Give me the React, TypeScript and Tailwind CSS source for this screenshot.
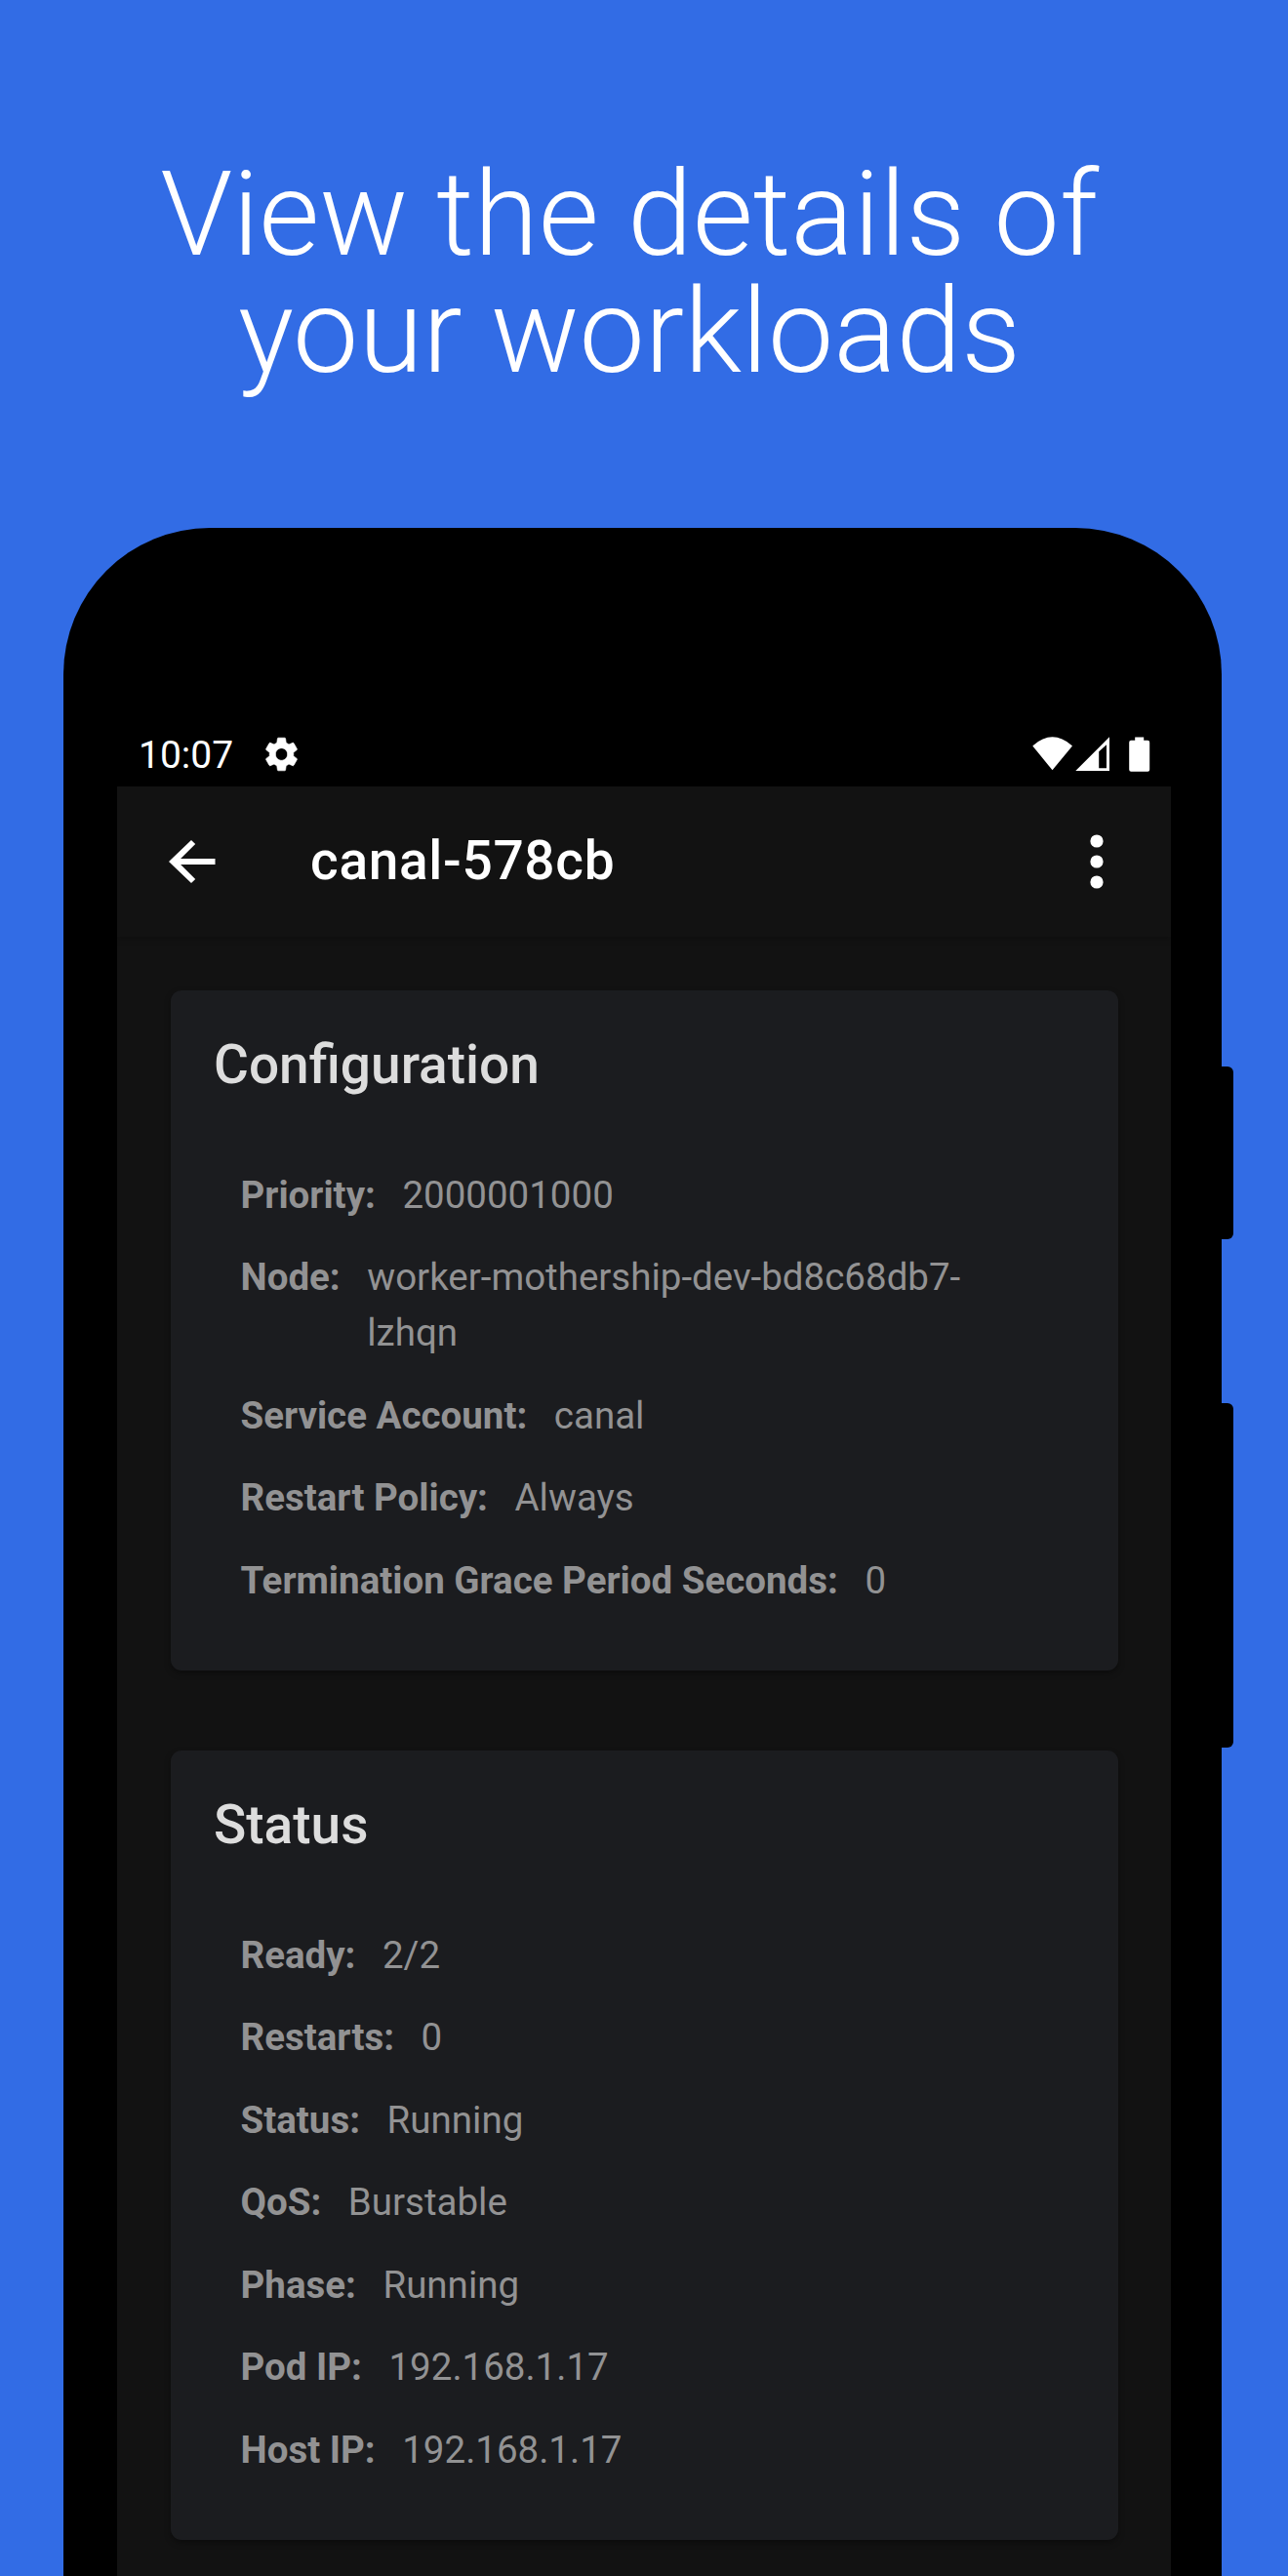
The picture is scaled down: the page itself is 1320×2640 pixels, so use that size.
import React from "react";

type Row = { label: string; value: string };

const configuration: Row[] = [
  { label: "Priority:", value: "2000001000" },
  { label: "Node:", value: "worker-mothership-dev-bd8c68db7-lzhqn" },
  { label: "Service Account:", value: "canal" },
  { label: "Restart Policy:", value: "Always" },
  { label: "Termination Grace Period Seconds:", value: "0" },
];

const status: Row[] = [
  { label: "Ready:", value: "2/2" },
  { label: "Restarts:", value: "0" },
  { label: "Status:", value: "Running" },
  { label: "QoS:", value: "Burstable" },
  { label: "Phase:", value: "Running" },
  { label: "Pod IP:", value: "192.168.1.17" },
  { label: "Host IP:", value: "192.168.1.17" },
];

function Card({ title, rows }: { title: string; rows: Row[] }) {
  return (
    <section className="rounded-[11px] bg-[#1b1c1f] px-11 pt-[43px] pb-[64.2px] shadow-[0_3px_6px_rgba(0,0,0,0.35)]">
      <h2 className="h-[66px] text-[55px] leading-[66px] font-medium text-[#dddddd]">{title}</h2>
      <dl className="mt-[71.8px] flex flex-col gap-[27.5px] pr-11 pl-[27.5px]">
        {rows.map((r) => (
          <div key={r.label} className="flex gap-[27.5px] text-[38.5px] leading-[57px] text-[#929293]">
            <dt className="shrink-0 font-bold">{r.label}</dt>
            <dd className="max-w-[640px]">{r.value}</dd>
          </div>
        ))}
      </dl>
    </section>
  );
}

function StatusBar() {
  return (
    <div className="flex h-[67px] items-center text-white">
      <span className="ml-[22px] w-[97px] pt-[4px] text-[39px] leading-[45px]">10:07</span>
      <svg
        className="mt-[1px] ml-[29px] h-[42px] w-[41px]"
        viewBox="0 0 24 24"
        preserveAspectRatio="none"
        fill="currentColor"
        stroke="currentColor"
        strokeWidth="0.4"
      >
        <path d="M19.14 12.94c.04-.3.06-.61.06-.94 0-.32-.02-.64-.07-.94l2.03-1.58c.18-.14.23-.41.12-.61l-1.92-3.32c-.12-.22-.37-.29-.59-.22l-2.39.96c-.5-.38-1.03-.7-1.62-.94l-.36-2.54c-.04-.24-.24-.41-.48-.41h-3.84c-.24 0-.43.17-.47.41l-.36 2.54c-.59.24-1.13.57-1.62.94l-2.39-.96c-.22-.08-.47 0-.59.22L2.74 8.87c-.12.21-.08.47.12.61l2.03 1.58c-.05.3-.09.63-.09.94s.02.64.07.94l-2.03 1.58c-.18.14-.23.41-.12.61l1.92 3.32c.12.22.37.29.59.22l2.39-.96c.5.38 1.03.7 1.62.94l.36 2.54c.05.24.24.41.48.41h3.84c.24 0 .44-.17.47-.41l.36-2.54c.59-.24 1.13-.56 1.62-.94l2.39.96c.22.08.47 0 .59-.22l1.92-3.32c.12-.22.07-.47-.12-.61l-2.01-1.58zM12 15.6c-1.98 0-3.6-1.62-3.6-3.6s1.62-3.6 3.6-3.6 3.6 1.62 3.6 3.6-1.62 3.6-3.6 3.6z" />
      </svg>
      <svg className="ml-auto h-[36px] w-[121px]" viewBox="0 0 121 36" fill="currentColor">
        <path d="M0.3 9.5Q20.5-8.8 41 9.5L20.5 34.3Z" />
        <path fillRule="evenodd" d="M44.3 35L79 0.3V35ZM68.2 15.2V32.2H76V8.2Z" />
        <path d="M105.2 0.5h9v3.3h4q2 0 2 2v28q0 2-2 2h-17q-2 0-2-2v-28q0-2 2-2h4z" />
      </svg>
      <span className="w-[21px]" />
    </div>
  );
}

function AppBar() {
  return (
    <header className="flex h-[154px] items-center bg-[#121212] text-white shadow-[0_3px_6px_rgba(0,0,0,0.18)]">
      <svg className="ml-[53px] h-[46px] w-[48px]" viewBox="0 0 48 48" preserveAspectRatio="none" fill="currentColor">
        <path d="M47.5 20.9H12.1L27.2 5.2L23 1L0 24L23 47L27.2 42.8L12.1 27H47.5Z" />
      </svg>
      <h1 className="ml-[97px] pb-[2px] text-[55px] leading-[64px] font-medium tracking-[0.0125em]">canal-578cb</h1>
      <svg className="mr-[69px] ml-auto h-[56px] w-[14px]" viewBox="0 0 14 56" fill="currentColor">
        <circle cx="7" cy="7" r="6.6" />
        <circle cx="7" cy="28" r="6.6" />
        <circle cx="7" cy="49" r="6.6" />
      </svg>
    </header>
  );
}

export default function App() {
  return (
    <div className="flex h-[2640px] w-[1320px] flex-col overflow-hidden bg-[#326ce5] font-[Roboto,sans-serif]">
      <div className="h-[541px] shrink-0 pt-[160px] text-center">
        <p className="pr-[30px] text-[120px] leading-[120px] font-light text-white">
          View the details of
          <br />
          your workloads
        </p>
      </div>
      <div className="relative ml-[65px] h-[2300px] w-[1187px] shrink-0 rounded-t-[150px] bg-black pt-[198px] pr-[52px] pl-[55px]">
        <div className="absolute top-[552px] left-full h-[177px] w-[12px] rounded-r-[6px] bg-black" />
        <div className="absolute top-[897px] left-full h-[353px] w-[12px] rounded-r-[6px] bg-black" />
        <StatusBar />
        <div className="h-[2000px] bg-[#121212]">
          <AppBar />
          <main className="flex flex-col gap-[82px] pt-[55px] pr-[54px] pl-[55px]">
            <Card title="Configuration" rows={configuration} />
            <Card title="Status" rows={status} />
          </main>
        </div>
      </div>
    </div>
  );
}
